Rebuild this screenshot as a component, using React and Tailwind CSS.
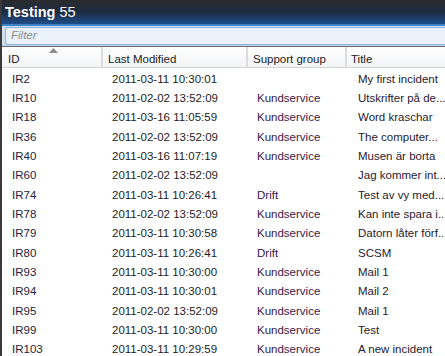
import React from "react";

const rows = [
  ["IR2", "2011-03-11 10:30:01", "", "My first incident"],
  ["IR10", "2011-02-02 13:52:09", "Kundservice", "Utskrifter på de..."],
  ["IR18", "2011-03-16 11:05:59", "Kundservice", "Word kraschar"],
  ["IR36", "2011-02-02 13:52:09", "Kundservice", "The computer..."],
  ["IR40", "2011-03-16 11:07:19", "Kundservice", "Musen är borta"],
  ["IR60", "2011-02-02 13:52:09", "", "Jag kommer int..."],
  ["IR74", "2011-03-11 10:26:41", "Drift", "Test av vy med..."],
  ["IR78", "2011-02-02 13:52:09", "Kundservice", "Kan inte spara i..."],
  ["IR79", "2011-03-11 10:30:58", "Kundservice", "Datorn låter förf..."],
  ["IR80", "2011-03-11 10:26:41", "Drift", "SCSM"],
  ["IR93", "2011-03-11 10:30:00", "Kundservice", "Mail 1"],
  ["IR94", "2011-03-11 10:30:01", "Kundservice", "Mail 2"],
  ["IR95", "2011-02-02 13:52:09", "Kundservice", "Mail 1"],
  ["IR99", "2011-03-11 10:30:00", "Kundservice", "Test"],
  ["IR103", "2011-03-11 10:29:59", "Kundservice", "A new incident"],
];

export default function App() {
  return (
    <div
      className="w-[445px] h-[356px] overflow-hidden bg-white flex flex-col border-l-2 border-[#3a3a3a]"
      style={{ fontFamily: '"Liberation Sans", Arial, sans-serif' }}
    >
      {/* title bar */}
      <div className="h-[24px] shrink-0 bg-gradient-to-b from-[#2a2b2f] via-[#1d2b40] to-[#1c4e8e] flex items-center pl-[3px] text-white text-[14.5px] leading-none">
        <span className="font-bold">Testing</span>
        <span className="ml-[4px]">55</span>
      </div>
      <div className="h-[2px] shrink-0 bg-[#3f82c6]" />

      {/* filter */}
      <div className="shrink-0 bg-[#cfe2f3] pt-[1px] pl-[3px]">
        <div className="h-[18px] border border-[#8fb3d9] rounded-l-[3px] border-r-0 bg-[#eaf1f9] flex items-center pl-[5px] text-[11.5px] italic text-[#8a8a8a]">
          Filter
        </div>
      </div>
      <div className="h-[1px] shrink-0 bg-[#bcd8ee]" />
      <div className="h-[1px] shrink-0 bg-[#6b6b6b]" />

      {/* column headers */}
      <div className="h-[21px] shrink-0 flex bg-gradient-to-b from-white to-[#f3f4f6] border-b border-[#d5d5d5] text-[11.5px] leading-none text-[#1a1a1a]">
        <div className="w-[101px] shrink-0 pt-[7px] pl-[6px] border-r-2 border-[#dcdcdc] relative">
          ID
          <svg className="absolute left-[47px] top-[1px]" width="9" height="5" viewBox="0 0 9 5">
            <path d="M0 5 L4.5 0 L9 5 Z" fill="#8c8c8c" />
          </svg>
        </div>
        <div className="w-[145px] shrink-0 pt-[7px] pl-[5px] border-r-2 border-[#dcdcdc]">Last Modified</div>
        <div className="w-[99px] shrink-0 pt-[7px] pl-[5px] border-r-2 border-[#dcdcdc]">Support group</div>
        <div className="flex-1 min-w-0 pt-[7px] pl-[4px]">Title</div>
      </div>

      {/* rows */}
      <div className="flex flex-col pt-[1.5px] text-[11.5px]">
        {rows.map(([id, date, group, title]) => (
          <div key={id} className="h-[19.35px] flex items-center shrink-0">
            <div className="w-[103px] shrink-0 pl-[10px] text-[#1b2240]">{id}</div>
            <div className="w-[147px] shrink-0 pl-[7px] text-[#1c1c1c]">{date}</div>
            <div className="w-[101px] shrink-0 pl-[5px] text-[#3a1848]">{group}</div>
            <div className="flex-1 min-w-0 pl-[5px] text-[#1f1a30] whitespace-nowrap overflow-hidden">{title}</div>
          </div>
        ))}
      </div>
    </div>
  );
}
